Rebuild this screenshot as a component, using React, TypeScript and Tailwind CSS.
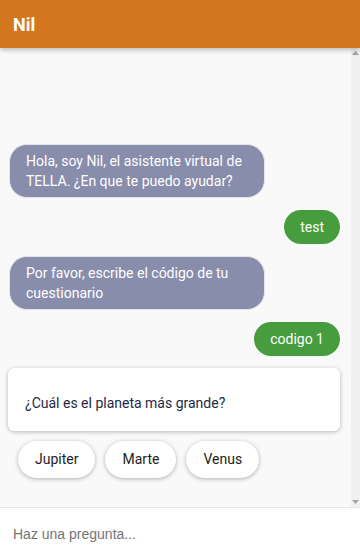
import React, { useState } from 'react';

type Msg = { from: 'bot' | 'user'; text: string };

const messages: Msg[] = [
  { from: 'bot', text: 'Hola, soy Nil, el asistente virtual de TELLA. ¿En que te puedo ayudar?' },
  { from: 'user', text: 'test' },
  { from: 'bot', text: 'Por favor, escribe el código de tu cuestionario' },
  { from: 'user', text: 'codigo 1' },
];

const options = ['Jupiter', 'Marte', 'Venus'];

export default function App() {
  const [question, setQuestion] = useState('');

  return (
    <div className="flex h-[557px] w-[360px] flex-col bg-white font-['Roboto','Noto_Sans',sans-serif]">
      {/* Header */}
      <div className="relative z-10 flex h-[48px] shrink-0 items-center bg-[#d2761f] px-[13px] shadow-[0_2px_5px_rgba(0,0,0,0.25)]">
        <span className="text-[18px] font-bold text-white">Nil</span>
      </div>

      {/* Chat area */}
      <div className="flex min-h-0 flex-1 bg-[#f9f9f9]">
        <div className="flex flex-1 flex-col justify-end pb-[29px] pl-[9px] pr-[11px]">
          <div className="flex flex-col gap-[12px]">
            {messages.map((m, i) =>
              m.from === 'bot' ? (
                <div key={i} className="flex justify-start">
                  <div className="max-w-[256px] rounded-[18px] border border-[#e4e4ea] bg-[#888dab] px-4 py-[6px] text-[14px] leading-[20px] text-white">
                    {m.text}
                  </div>
                </div>
              ) : (
                <div key={i} className="flex justify-end">
                  <div className="rounded-full bg-[#479c3d] px-4 py-[7px] text-[14px] leading-[20px] text-white">
                    {m.text}
                  </div>
                </div>
              )
            )}
          </div>

          <div className="-ml-px mt-[12px] rounded-md bg-white pb-[18px] pl-[17px] pr-4 pt-[25px] text-[14px] leading-[20px] text-[#1e2a44] shadow-[0_1px_4px_rgba(0,0,0,0.28)]">
            ¿Cuál es el planeta más grande?
          </div>

          <div className="ml-[9px] mt-[10px] flex gap-[10px]">
            {options.map((o) => (
              <button
                key={o}
                className="h-[37px] rounded-full bg-white px-[17px] text-[14px] text-[#222] shadow-[0_1px_4px_rgba(0,0,0,0.3)]"
              >
                {o}
              </button>
            ))}
          </div>
        </div>

        {/* Scrollbar */}
        <div className="flex w-[9px] shrink-0 flex-col items-center justify-between bg-[#f0f0f0] py-[3px]">
          <svg width="7" height="4" viewBox="0 0 7 4">
            <path d="M0 4 L3.5 0 L7 4 Z" fill="#a3a3a3" />
          </svg>
          <svg width="7" height="4" viewBox="0 0 7 4">
            <path d="M0 0 L7 0 L3.5 4 Z" fill="#a3a3a3" />
          </svg>
        </div>
      </div>

      {/* Input */}
      <div className="flex h-[50px] shrink-0 items-center border-t border-[#e6e6e6] bg-white px-[13px] pt-[3px]">
        <input
          autoFocus
          value={question}
          onChange={(e) => setQuestion(e.target.value)}
          placeholder="Haz una pregunta..."
          className="w-full bg-transparent font-['Liberation_Sans',Arial,sans-serif] text-[14px] text-[#222] outline-none placeholder:text-[#757575]"
        />
      </div>
    </div>
  );
}
